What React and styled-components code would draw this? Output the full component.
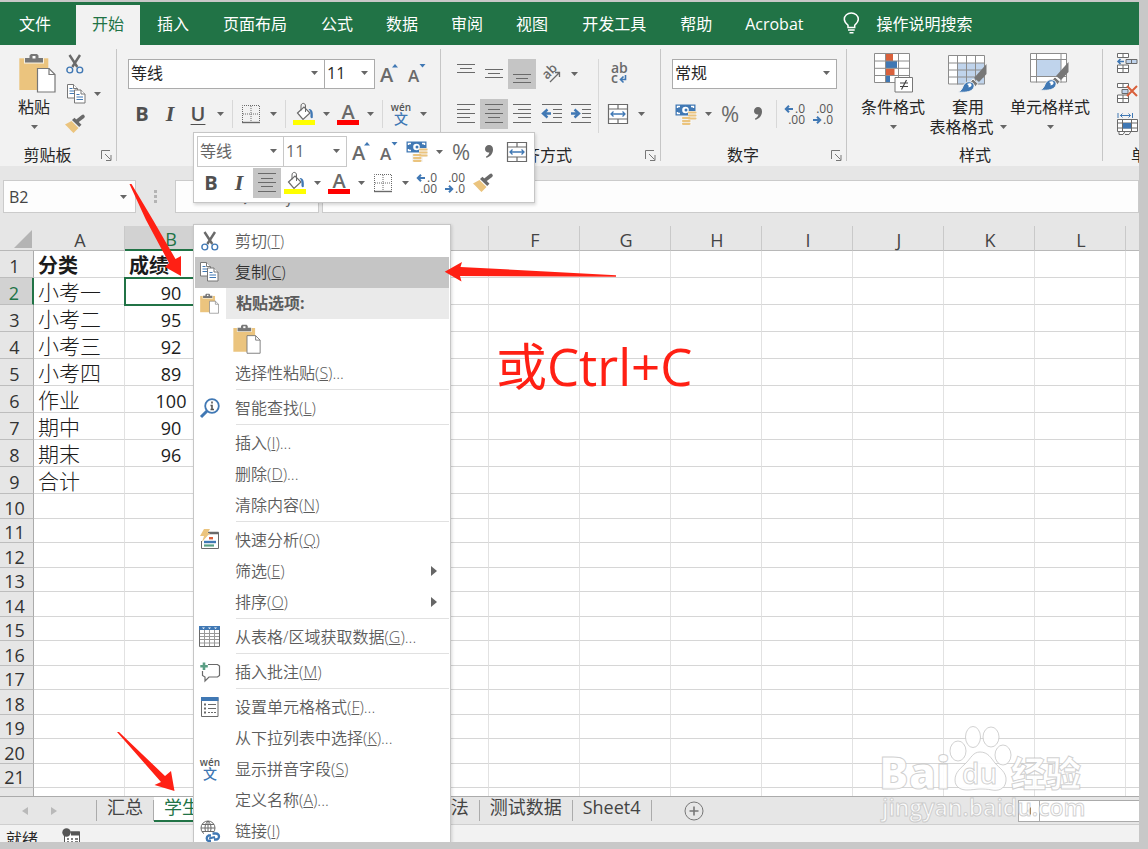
import React, {useState} from 'react'
import styled, {createGlobalStyle} from 'styled-components'

const green = '#217346'
const grey = '#6a6a6a'
const blue = '#4078b4'
const sand = '#ebc47e'
const rust = '#d9603b'

const GlobalStyle = createGlobalStyle`

    * {
        box-sizing: border-box;
    }

    body {
        margin: 0;
        font-family: "Open Sans", "Noto Sans CJK SC", sans-serif;
        font-size: 16px;
        color: #262626;
        background-color: #c8c8c8;
    }

    button, input, select {
        font: inherit;
        color: inherit;
        margin: 0;
        padding: 0;
        border: none;
        background: none;
    }

    svg {
        display: block;
        flex-shrink: 0;
        overflow: visible;
    }

`

const Page = styled.div`

    height: 100vh;
    padding: 2px 9px 7px 0;

`

const Window = styled.div`

    height: 100%;
    display: flex;
    flex-direction: column;
    position: relative;
    overflow: hidden;
    background-color: #e6e6e6;

`

const TabBar = styled.nav`

    display: flex;
    gap: 1px;
    height: 43px;
    flex-shrink: 0;
    padding: 3px 0 0 3px;
    background-color: ${green};
    overflow: hidden;

`

const RibbonTab = styled.button`

    padding: 0 ${props => props.$wide ? "17px" : "16px"} 2px;
    margin-right: ${props => props.$file ? "8px" : "0"};
    line-height: 36px;
    white-space: nowrap;
    color: ${props => props.$active ? green : "#ffffff"};
    background-color: ${props => props.$active ? "#f2f2f2" : "transparent"};

`

const TellMe = styled.button`

    display: flex;
    align-items: center;
    gap: 16px;
    padding: 0 0 4px 23px;
    color: #ffffff;
    white-space: nowrap;

`

const Ribbon = styled.div`

    display: flex;
    height: 121px;
    flex-shrink: 0;
    overflow: hidden;
    background-color: #f2f2f2;

`

const Group = styled.section`

    display: flex;
    flex-direction: column;
    justify-content: space-between;
    flex-shrink: 0;
    height: 117px;
    margin-top: 4px;
    min-width: ${props => props.$min || 0}px;
    position: relative;

    &::after {
        content: "";
        position: absolute;
        top: 0;
        right: 0;
        width: 1px;
        height: 112px;
        background-color: #c6c6c6;
    }

`

const GroupBody = styled.div`

    display: flex;
    padding: ${props => props.$top}px 0 0 ${props => props.$left || 11}px;

`

const GroupFooter = styled.div`

    display: flex;
    align-items: center;
    height: 22px;

`

const GroupName = styled.span`

    flex: 1;
    padding-bottom: 2px;
    text-align: center;
    white-space: nowrap;

`

const LaunchButton = styled.button`

    width: 22px;
    display: flex;
    justify-content: center;

`

const Stack = styled.div`

    display: flex;
    flex-direction: column;
    gap: ${props => props.$gap || 0}px;

`

const ToolRow = styled.div`

    display: flex;
    align-items: center;
    height: 30px;

`

const ToolButton = styled.button`

    width: ${props => props.$width || 28}px;
    height: 30px;
    flex-shrink: 0;
    display: flex;
    align-items: center;
    justify-content: center;
    background-color: ${props => props.$active ? "#c5c5c5" : "transparent"};

`

const CaretButton = styled(ToolButton)`

    width: 16px;

`

const Letter = styled.span`

    font-family: ${props => props.$italic ? '"Liberation Serif", serif' : '"Open Sans", sans-serif'};
    font-size: ${props => props.$italic ? "22px" : "20px"};
    line-height: 24px;
    font-weight: ${props => props.$line ? 600 : 700};
    font-style: ${props => props.$italic ? "italic" : "normal"};
    text-decoration: ${props => props.$line ? "underline" : "none"};
    text-decoration-thickness: 1px;
    text-underline-offset: 3px;
    color: #505050;

`

const Percent = styled.span`

    font-size: 22px;
    line-height: 28px;
    padding-bottom: 2px;
    color: ${grey};

`

const Splitter = styled.span`

    width: 1px;
    height: ${props => props.$tall ? "74px" : "28px"};
    margin: 0 4px;
    background-color: #d8d8d8;

`

const Combo = styled.label`

    display: flex;
    align-items: center;
    width: ${props => props.$width}px;
    height: ${props => props.$pale ? "31px" : "30px"};
    padding: 0 6px 2px 2px;
    border: 1px solid ${props => props.$pale ? "#c8c8c8" : "#ababab"};
    background-color: #ffffff;
    color: ${props => props.$pale ? "#666666" : "#262626"};

    & + & {
        margin-left: -1px;
    }

`

const ComboSelect = styled.select`

    flex: 1;
    min-width: 0;
    appearance: none;
    outline: none;
    line-height: 24px;

`

const PasteButton = styled.button`

    display: flex;
    flex-direction: column;
    align-items: center;
    width: 46px;
    margin-right: 6px;
    padding-top: 4px;
    line-height: 20px;

`

const BigButton = styled.button`

    display: flex;
    flex-direction: column;
    align-items: center;
    width: ${props => props.$width}px;
    line-height: 20px;
    white-space: nowrap;

`

const IconBox = styled.span`

    height: 44px;
    display: flex;
    align-items: flex-start;
    padding-left: ${props => props.$shift ? "6px" : "0"};

`

const CaretLine = styled.span`

    height: 20px;
    display: flex;
    align-items: center;
    gap: 6px;

`

const FormulaBar = styled.div`

    display: flex;
    flex-shrink: 0;
    height: 60px;
    padding: 14px 0 13px 3px;

`

const BarBox = styled.label`

    display: flex;
    align-items: center;
    width: ${props => props.$width ? props.$width + "px" : "auto"};
    flex: ${props => props.$width ? "none" : 1};
    padding: 0 8px 0 5px;
    border: 1px solid #cbcbcb;
    background-color: #fdfdfd;

`

const BarInput = styled.input`

    flex: 1;
    min-width: 0;
    outline: none;
    color: #444444;

`

const Grip = styled.span`

    width: 39px;
    display: flex;
    flex-direction: column;
    align-items: center;
    justify-content: center;
    gap: 2px;

    & > i {
        width: 3px;
        height: 3px;
        background-color: #b4b4b4;
    }

`

const EntryButtons = styled.div`

    display: flex;
    align-items: center;
    justify-content: space-around;
    width: 144px;
    margin-right: 3px;
    border: 1px solid #cbcbcb;
    background-color: #fdfdfd;
    color: ${grey};

`

const SheetArea = styled.main`

    flex: 1;
    min-height: 0;
    overflow: hidden;
    background-color: #ffffff;

`

const Sheet = styled.table`

    table-layout: fixed;
    width: 1490px;
    border-collapse: separate;
    border-spacing: 0;
    font-size: 18px;
    line-height: 21px;

`

const HeadRow = styled.tr`

    height: 25px;

`

const Row = styled.tr`

    height: ${props => props.$height}px;

`

const Corner = styled.th`

    width: 34px;
    padding: 2px 2px 0 14px;
    background-color: #e6e6e6;
    border-bottom: 1px solid #b8b8b8;

`

const ColHead = styled.th`

    width: 91px;
    padding: 4px 0 0 2px;
    font-weight: 400;
    line-height: 19px;
    color: ${props => props.$active ? green : "#444444"};
    background-color: ${props => props.$active ? "#d2d2d2" : "#e6e6e6"};
    border-right: 1px solid #c9c9c9;
    border-bottom: ${props => props.$active ? "2px solid " + green : "1px solid #b8b8b8"};

`

const RowHead = styled.th`

    padding: 4px 4px 0 0;
    font-weight: 400;
    line-height: 19px;
    color: ${props => props.$active ? green : "#333333"};
    background-color: ${props => props.$active ? "#d2d2d2" : "#e6e6e6"};
    border-right: ${props => props.$active ? "2px solid " + green : "1px solid #ababab"};
    border-bottom: 1px solid #bdbdbd;

`

const Cell = styled.td`

    padding: ${props => props.$number ? "5px 3px 0 5px" : "2px 4px 0"};
    color: #1c1c1c;
    white-space: nowrap;
    font-size: ${props => props.$number ? "18px" : props.$bold ? "20px" : "21px"};
    font-weight: ${props => props.$bold ? 700 : props.$number ? 400 : 300};
    text-align: ${props => props.$number ? "center" : "left"};
    border-right: 1px solid #e2e2e2;
    border-bottom: 1px solid #d6d6d6;
    outline: ${props => props.$active ? "2px solid " + green : "none"};
    outline-offset: -1px;

`

const SheetBar = styled.div`

    display: flex;
    flex-shrink: 0;
    height: 28px;
    border-top: 1px solid #ababab;
    font-size: 18px;
    color: #444444;

`

const SheetNav = styled.div`

    display: flex;
    align-items: center;
    gap: 23px;
    width: 97px;
    padding-left: 22px;
    border-right: 1px solid #ababab;
    margin: 3px 0;

`

const SheetTab = styled.button`

    position: relative;
    padding: 0 10px 4px;
    margin: 0 1px 2px 0;
    line-height: 20px;
    white-space: nowrap;
    color: ${props => props.$active ? green : "#444444"};
    background-color: ${props => props.$active ? "#ffffff" : "transparent"};
    border-bottom: 2px solid ${props => props.$active ? green : "transparent"};

    &::after {
        content: "";
        position: absolute;
        right: -1px;
        top: 3px;
        width: 1px;
        height: 21px;
        background-color: #ababab;
    }

`

const AddSheet = styled.button`

    margin-left: 32px;

`

const ScrollTrack = styled.div`

    display: flex;
    width: 121px;
    height: 22px;
    margin: 3px 0 0 auto;
    border: 1px solid #ababab;
    border-right: none;
    background-color: #ffffff;

`

const ScrollButton = styled.button`

    width: 21px;
    display: flex;
    align-items: center;
    justify-content: center;
    border-right: 1px solid #ababab;

`

const StatusBar = styled.footer`

    display: flex;
    flex-shrink: 0;
    gap: 24px;
    height: 18px;
    padding: 3px 6px 0;
    overflow: hidden;
    line-height: 22px;
    border-top: 1px solid #cfcfcf;
    background-color: #f2f2f2;

`

const MiniBar = styled.div`

    position: absolute;
    left: 193px;
    top: 130px;
    z-index: 3;
    padding: 3px 3px 4px;
    border: 1px solid #c6c6c6;
    background-color: #ffffff;
    box-shadow: 1px 2px 3px rgba(0, 0, 0, 0.15);

    ${ToolRow} {
        height: 31px;
    }

`

const Menu = styled.div`

    position: absolute;
    left: 193px;
    top: 222px;
    z-index: 2;
    width: 258px;
    padding: 1px;
    border: 1px solid #c6c6c6;
    background-color: #ffffff;
    box-shadow: 1px 1px 3px rgba(0, 0, 0, 0.15);
    font-weight: 350;
    color: #5c5c5c;

`

const MenuItem = styled.button`

    display: flex;
    align-items: center;
    width: 100%;
    height: 31px;
    padding-bottom: 2px;
    text-align: left;
    white-space: nowrap;
    color: ${props => props.$active ? "#303030" : "inherit"};
    background-color: ${props => props.$active ? "#c5c5c5" : "transparent"};

`

const MenuIcon = styled.span`

    width: 31px;
    padding-right: 2px;
    display: flex;
    justify-content: center;

`

const MenuText = styled.span`

    flex: 1;
    padding: 0 0 2px 9px;

`

const MenuArrow = styled.span`

    padding-right: 12px;

`

const MenuHeading = styled.div`

    display: flex;
    align-items: center;
    height: 31px;

    & > strong {
        flex: 1;
        padding-left: 10px;
        line-height: 31px;
        background-color: #eaeaea;
    }

`

const PasteOptions = styled.div`

    height: 39px;
    padding: 5px 0 0 38px;

`

const MenuLine = styled.div`

    margin: 0 0 3px 41px;
    border-top: 1px solid #e1e1e1;

`

const Arrows = styled.svg`

    position: absolute;
    left: 0;
    top: 0;
    z-index: 4;
    pointer-events: none;
    fill: #ff2014;

`

const Note = styled.p`

    position: absolute;
    left: 496px;
    top: 329px;
    margin: 0;
    z-index: 4;
    font-size: 51px;
    line-height: 70px;
    color: #ff2014;

`

const Watermark = styled.svg`

    position: absolute;
    right: 48px;
    bottom: 16px;
    z-index: 4;
    pointer-events: none;

`

const Caret = ({left, right}) => {

    if(left) return <svg width="6" height="8"><path d="M6 0v8L0 4z" fill="#b9b9b9" /></svg>
    if(right) return <svg width="6" height="8"><path d="M0 0v8l6-4z" fill="#b9b9b9" /></svg>

    return <svg width="7" height="4"><path d="M0 0h7L3.5 4z" fill="#666" /></svg>

}

const PasteIcon = ({width, height}) => (
    <svg width={width} height={height} viewBox="0 0 37 40">
        <path d="M.3 5.3h29V37H.3z" fill={sand} />
        <path d="M5 5h20v5.600H5z" fill="#f7f0e0" />
        <path d="M6 5h4.500V2.500L12 1h6l1.500 1.500V5H24v4.500H6z" fill="#777" />
        <path d="M13.500 3h3v2.500h-3z" fill="#fff" />
        <path d="M18.500 15.500H30l6 6v17.500H18.500z" fill="#fff" stroke="#777" strokeWidth="1.200" />
        <path d="M30 15.500v6h6" fill="none" stroke="#777" strokeWidth="1.200" />
    </svg>
)

const CutIcon = () => (
    <svg width="18" height="20" fill="none">
        <path d="M3.500 1l7.800 12M14 1L6.300 13" stroke={grey} strokeWidth="2.400" />
        <circle cx="3.800" cy="16" r="2.900" stroke={blue} strokeWidth="1.400" />
        <circle cx="13.800" cy="16" r="2.900" stroke={blue} strokeWidth="1.400" />
    </svg>
)

const CopyIcon = () => (
    <svg width="19" height="20" fill="#fff">
        <path d="M.5.500h6l4 4v9.500H.5z" stroke="#777" />
        <path d="M6.500.500v4h4" stroke="#777" />
        <path d="M2.500 4.500h3M2.500 7h5M2.500 9.500h5" stroke={blue} />
        <path d="M7.500 6h6.500l4 4v9H7.500z" stroke="#777" />
        <path d="M14 6v4h4" stroke="#777" />
        <path d="M9.500 10.500h3M9.500 13h6.500M9.500 15.500h6.500" stroke={blue} />
    </svg>
)

const BrushIcon = () => (
    <svg width="20" height="18">
        <path d="M0 9.500L6.500 6l7 7-5 5C5 15 3 12 0 9.500z" fill={sand} />
        <path d="M7 5l2.500-2.200 7 7L14.200 12z" fill={grey} />
        <path d="M12 6.200L18 1.500" stroke={grey} strokeWidth="3.600" strokeLinecap="round" />
    </svg>
)

const GrowIcon = ({down}) => (
    <svg width="20" height="24">
        <text x="1" y="20" fontSize={down ? 17 : 20} fontWeight="600" fill={grey}>A</text>
        {down
            ? <path d="M12.500 2h6l-3 3.500z" fill={blue} />
            : <path d="M13 5.500h6L16 2z" fill={blue} />}
    </svg>
)

const BordersIcon = () => (
    <svg width="20" height="20" fill="none" stroke={grey}>
        <path d="M1.500 18V1.500h17V18M10 2v16M2 10h16" strokeDasharray="1 1" />
        <path d="M1 18.500h18" strokeWidth="1.400" />
    </svg>
)

const FillIcon = () => (
    <svg width="22" height="24" fill="none">
        <path d="M4.500 11L11 5l6 6-7 6.500z" fill="#fff" stroke={grey} strokeWidth="1.200" />
        <path d="M8 8.500V4c0-3.500 4.500-3.500 4.500 0v6" stroke={grey} />
        <path d="M15.500 7c3-.5 5 2 4.200 9-2 .5-2.500-.5-2.200-3 .2-3-.5-4.500-2-6z" fill={blue} />
        <path d="M0 18h22v5H0z" fill="#ffff00" />
    </svg>
)

const FontColorIcon = () => (
    <svg width="22" height="24">
        <text x="11" y="16.500" fontSize="20" fontWeight="600" textAnchor="middle" fill={grey}>A</text>
        <path d="M0 18h22v5H0z" fill="#ff0000" />
    </svg>
)

const PhoneticIcon = () => (
    <svg width="22" height="24">
        <text x="11" y="8.500" fontSize="10" fontWeight="600" textAnchor="middle" fill="#555">wén</text>
        <text x="11" y="22" fontSize="14" fontWeight="500" textAnchor="middle" fill={blue}>文</text>
    </svg>
)

const LinesIcon = ({lines}) => (
    <svg width="20" height="20" stroke={grey}>
        {lines.map(([y, x, w]) => <path key={y} d={`M${x} ${y}.500h${w}`} />)}
    </svg>
)

const topLines = [[0, 1, 18], [4, 4, 12], [8, 1, 18]]
const midLines = [[5, 1, 18], [9, 4, 12], [13, 1, 18]]
const bottomLines = [[10, 1, 18], [14, 4, 12], [18, 1, 18]]
const leftLines = [[0, 1, 18], [5, 1, 13], [9, 1, 18], [13, 1, 13], [18, 1, 18]]
const centerLines = [[0, 1, 18], [5, 4, 12], [9, 1, 18], [13, 4, 12], [18, 1, 18]]
const rightLines = [[0, 1, 18], [5, 6, 13], [9, 1, 18], [13, 6, 13], [18, 1, 18]]

const IndentIcon = ({right}) => (
    <svg width="20" height="20" fill="none">
        <path d="M0 .5h20M11 5.500h9M11 9.500h9M11 13.500h9M0 18.500h20" stroke={grey} />
        {right
            ? <path d="M0 9.500h6M3.500 5.500L8 9.500l-4.500 4" stroke={blue} strokeWidth="2.400" />
            : <path d="M9 9.500H3M5.500 5.500L1 9.500l4.500 4" stroke={blue} strokeWidth="2.400" />}
    </svg>
)

const OrientationIcon = () => (
    <svg width="20" height="20" fill="none">
        <text x="3" y="13" fontSize="13" fontWeight="600" fill={grey} transform="rotate(-45 8 11)">ab</text>
        <path d="M9 18l9-9M14 8.500h4.500V13" stroke={grey} strokeWidth="1.300" />
    </svg>
)

const WrapIcon = () => (
    <svg width="20" height="24" fill="none">
        <text x="3" y="11" fontSize="14" fontWeight="600" fill={grey}>ab</text>
        <text x="3" y="21" fontSize="14" fontWeight="600" fill={grey}>c</text>
        <path d="M17.500 13v4.500H13M15.500 14.500l-3 3 3 3" stroke={blue} strokeWidth="1.600" />
    </svg>
)

const MergeIcon = () => (
    <svg width="20" height="20" fill="none">
        <path d="M.5.500h19v19H.5zM.5 5h19M.5 15h19M10 .5V5M10 15v4.500" fill="#fff" stroke={grey} strokeWidth="1.200" />
        <path d="M3 10h14M5.500 7.500L3 10l2.500 2.500M14.500 7.500L17 10l-2.500 2.500" stroke={blue} strokeWidth="1.300" />
    </svg>
)

const MoneyIcon = () => (
    <svg width="22" height="21">
        <path d="M.5.500h20v11H.5z" fill={blue} />
        <path d="M2.500 4V2.500H5M16 2.500h2.500V4M2.500 8v1.500H5" fill="none" stroke="#fff" strokeWidth="1.400" />
        <circle cx="10.500" cy="6" r="3.300" fill="#fff" />
        <circle cx="11" cy="6" r="1.500" fill={blue} />
        <path d="M13 7h9v9h-5v5H6v-8h7z" fill="#f5f5f5" />
        <path d="M14 8.500h6.500M14 11.500h6.500M14 14.500h6.500M8 14h6.500M8 17h6.500M8 19.800h6.500" stroke={sand} strokeWidth="2.200" strokeLinecap="round" />
    </svg>
)

const CommaIcon = () => (
    <svg width="10" height="16">
        <path d="M5 1c2.500 0 4 1.700 4 4.500 0 4-2.500 7-6.500 8.500L2 12.500c2-1 3.200-2.500 3.400-4C3 9 1 7.500 1 5c0-2.300 1.700-4 4-4z" fill={grey} />
    </svg>
)

const DecimalIcon = ({less}) => (
    <svg width="22" height="24" fill="none">
        <text x="21" y="11" fontSize="12" fontWeight="500" textAnchor="end" fill="#555">{less ? ".00" : ".0"}</text>
        <text x="21" y="22" fontSize="12" fontWeight="500" textAnchor="end" fill="#555">{less ? ".0" : ".00"}</text>
        {less
            ? <path d="M1 18h7M5 14.800L8.200 18 5 21.200" stroke={blue} strokeWidth="2" />
            : <path d="M9 7H2M5 3.800L1.800 7 5 10.200" stroke={blue} strokeWidth="2" />}
    </svg>
)

const LaunchIcon = () => (
    <svg width="11" height="11" fill="none" stroke="#777">
        <path d="M.5 9V.5H9M4 4l5.500 5.500M10 5v5.500H5" />
    </svg>
)

const BulbIcon = () => (
    <svg width="17" height="22" fill="none" stroke="#fff" strokeWidth="1.500">
        <path d="M5 15.500v-2.300C3 11.500 1.300 9.800 1.300 7.300 1.300 3.700 4.500 1 8.300 1s7 2.700 7 6.300c0 2.500-1.700 4.200-3.600 5.900v2.300zM5 18h6.700M6.500 20.700h4" />
    </svg>
)

const ConditionalIcon = () => (
    <svg width="39" height="40">
        <path d="M.5.500h35v29H.5z" fill="#fff" />
        <path d="M11.500 1H19v7h-7.500zM11.500 15.500H20.500v7h-9z" fill={rust} />
        <path d="M11.500 8H23v7H11.500zM11.500 22.500H16v6.500h-4.500z" fill={blue} />
        <path d="M.5.500h35v29H.5zM.5 8h35M.5 15.300h35M.5 22.500h35M11.500 .5v29M24.500 .5v29" fill="none" stroke="#8c8c8c" />
        <path d="M21 24.500h17.500v14.500H21z" fill="#fff" stroke="#777" />
        <path d="M26 30h8M26 33.500h8M32.500 27l-5 9.500" stroke="#444" strokeWidth="1.200" />
    </svg>
)

const PaintBrush = () => (
    <g>
        <path d="M38.500 9v10L31 27l-5-4z" fill="#777" />
        <path d="M25 24l5 4.500-2.500 3-5-5z" fill="#777" stroke="#f2f2f2" />
        <path d="M10 37c3-1 4-3 5-5.500 1.500-4 4.500-5.300 8-4.500 3.500 1 4 4.500 2 7-3 3.500-9 3.500-15 3z" fill={blue} stroke="#f2f2f2" />
        <path d="M19 29c2-1 4-1 4.500.5s-1 2.500-3 3c.5-1.500 0-2.500-1.500-3.500z" fill="#fff" />
    </g>
)

const FormatTableIcon = () => (
    <svg width="40" height="40">
        <g transform="translate(0 2)">
            <path d="M.5.500h36v29H.5z" fill="#fff" />
            <path d="M10 8h27v21.500H10z" fill="#c0d4ec" />
            <path d="M.5.500h36v28.500H.5zM.5 8h36M.5 15h36M.5 22h36M9.500 .5v29M18.500 .5v29M27.500 .5v29" fill="none" stroke="#8c8c8c" />
            <PaintBrush />
        </g>
    </svg>
)

const CellStyleIcon = () => (
    <svg width="40" height="38">
        <path d="M.5.500h36v28.500H.5z" fill="#fff" />
        <path d="M7 7h24v17H7z" fill="#c0d4ec" />
        <path d="M.5.500h36v28.500H.5zM.5 6.500h36M.5 23.500h36M6.500 .5v29M31 .5v29" fill="none" stroke="#8c8c8c" />
        <PaintBrush />
    </svg>
)

const CellsIcon = ({kind}) => (
    <svg width="24" height="22" fill="#fff" stroke={grey}>
        {kind === "format"
            ? <>
                <path d="M.5 6.500h20v12H.5zM.5 10h20M.5 15h20M5.500 6.500v12M14.500 6.500v12M2 18.500v3h4l2-3M14 18.500l-2 3h-4" />
                <path d="M6 10h8v5.500H6z" fill={blue} stroke="none" />
                <path d="M1 0v5M15.500 0v5M3 2.500h10.500M5.500.500l-2 2 2 2M11.500.500l2 2-2 2" fill="none" stroke={blue} />
            </>
            : <>
                <path d="M.5.500h11v4H.5zM6 .5v4M.5 12h11v7.500H.5zM.5 15.500h11M6 12v7.500" />
                <path d={kind === "delete" ? "M5 6.500h6v4H5z" : "M9 6.500h11v4H9zM14.500 6.500v4"} fill="#c0d4ec" />
                {kind === "delete"
                    ? <path d="M10 3l10 10M20 3L10 13" stroke={rust} strokeWidth="2" />
                    : <path d="M7 8.500H1M3.500 6L1 8.500 3.500 11" fill="none" stroke={blue} strokeWidth="1.600" />}
            </>}
    </svg>
)

const LookupIcon = () => (
    <svg width="20" height="20" fill="none">
        <circle cx="12" cy="8" r="6.800" stroke={blue} strokeWidth="1.800" />
        <path d="M7 13L1 19" stroke={blue} strokeWidth="3" />
        <path d="M12 3.500v2M10.500 7.500H12v4M10.500 11.500h3.500" stroke="#555" strokeWidth="1.600" />
    </svg>
)

const QuickIcon = () => (
    <svg width="20" height="21" fill="none">
        <path d="M8 3.500h10.500v16h-17V12" fill="#fff" stroke={grey} />
        <path d="M8 4h10.500" stroke={grey} strokeWidth="2.500" />
        <path d="M9 9.200h4" stroke={rust} strokeWidth="2.400" />
        <path d="M4 13h12" stroke={blue} strokeWidth="2.400" />
        <path d="M4 16.500h10" stroke="#5a9e84" strokeWidth="2.200" />
        <path d="M4 0h6L7.500 4H10l-8 9 2-6H0z" fill={sand} />
    </svg>
)

const TableIcon = () => (
    <svg width="21" height="21" fill="none">
        <path d="M.5.500h20v20H.5z" fill="#fff" stroke={grey} />
        <path d="M5.500 4v16M10.500 4v16M15.500 4v16M1 7.500h19M1 10.500h19M1 13.500h19M1 17h19" stroke="#999" />
        <path d="M0 0h21v4H0z" fill={blue} />
        <path d="M3 1.500h3L4.500 3zM9 1.500h3L10.500 3zM15 1.500h3L16.500 3z" fill="#fff" />
    </svg>
)

const CommentIcon = () => (
    <svg width="20" height="20" fill="none">
        <path d="M8 2.500h9.500l2 1.500v9.500l-2 1.500H9l-4 4v-4l-2.500-1.500V9" stroke={grey} strokeWidth="1.200" />
        <path d="M4 .5v7.500M.3 4.200h7.500" stroke="#5a9e84" strokeWidth="2.600" />
    </svg>
)

const FormatIcon = () => (
    <svg width="18" height="20" fill="none">
        <path d="M.5.500h16.500v19H.5z" fill="#fff" stroke={grey} />
        <path d="M0 0h17.500v4H0z" fill={blue} />
        <path d="M3 7.500h2M3 11.500h2M3 15.500h2" stroke={grey} strokeWidth="2" />
        <path d="M7 7.500h8M7 11.500h8M7 15.500h2M10 15.500h2M13 15.500h2" stroke={grey} />
    </svg>
)

const LinkIcon = () => (
    <svg width="20" height="22" fill="none">
        <circle cx="8" cy="8" r="7" stroke={grey} />
        <path d="M1 8h14M2 4.500h12M2 11.500h12M8 1v14M8 1C4 4 4 12 8 15M8 1c4 3 4 11 0 14" stroke={grey} />
        <path d="M4 12h16v10H4z" fill="#fff" />
        <path d="M11 15.500h-2.500a3 3 0 000 5.500H11M12.500 13.500H16a3 3 0 010 6h-2M9 18.500l6-1.500" stroke={blue} strokeWidth="2.300" />
    </svg>
)

const MacroIcon = () => (
    <svg width="19" height="18">
        <path d="M2.500 4h15v13h-15z" fill="#fff" stroke="#555" />
        <path d="M9 3.500h9v4H9z" fill="#555" />
        <path d="M5 11h2M9 11h2M13 11h3M5 14h2M9 14h2M13 14h3" stroke="#555" strokeWidth="1.500" />
        <circle cx="4.500" cy="4.500" r="4.200" fill="#555" />
    </svg>
)

const tabs = ["文件", "开始", "插入", "页面布局", "公式", "数据", "审阅", "视图", "开发工具", "帮助", "Acrobat"]

const columns = "ABCDEFGHIJKLMNOP".split("")

const data = [
    ["分类", "成绩"],
    ["小考一", 90],
    ["小考二", 95],
    ["小考三", 92],
    ["小考四", 89],
    ["作业", 100],
    ["期中", 90],
    ["期末", 96],
    ["合计"],
]

const rows = Array.from({length: 24}, (_, i) => ({
    number: i + 1,
    height: i < 9 ? 27 : i % 2 ? 25 : 24,
    values: data[i] || [],
}))

const sheets = ["汇总", "学生成绩", "Sheet2", "Sheet3", "加权法", "测试数据", "Sheet4"]

const menuItems = [
    {text: "选择性粘贴", hotkey: "S", more: true},
    {line: true},
    {text: "智能查找", hotkey: "L", icon: <LookupIcon />},
    {line: true},
    {text: "插入", hotkey: "I", more: true},
    {text: "删除", hotkey: "D", more: true},
    {text: "清除内容", hotkey: "N"},
    {line: true},
    {text: "快速分析", hotkey: "Q", icon: <QuickIcon />},
    {text: "筛选", hotkey: "E", sub: true},
    {text: "排序", hotkey: "O", sub: true},
    {line: true},
    {text: "从表格/区域获取数据", hotkey: "G", more: true, icon: <TableIcon />},
    {line: true},
    {text: "插入批注", hotkey: "M", icon: <CommentIcon />},
    {line: true},
    {text: "设置单元格格式", hotkey: "F", more: true, icon: <FormatIcon />},
    {text: "从下拉列表中选择", hotkey: "K", more: true},
    {text: "显示拼音字段", hotkey: "S", icon: <PhoneticIcon />},
    {text: "定义名称", hotkey: "A", more: true},
    {text: "链接", hotkey: "I", icon: <LinkIcon />},
]

const ComboBox = ({label, value, width, pale}) => (
    <Combo $width={width} $pale={pale}>
        <ComboSelect aria-label={label} defaultValue={value}>
            <option>{value}</option>
        </ComboSelect>
        <Caret />
    </Combo>
)

const Drop = () => <CaretButton aria-label="更多"><Caret /></CaretButton>

const Footer = ({name, launch}) => (
    <GroupFooter>
        <GroupName>{name}</GroupName>
        {launch && <LaunchButton aria-label={name + "设置"}><LaunchIcon /></LaunchButton>}
    </GroupFooter>
)

const Item = ({text, hotkey, more, sub, icon, active}) => (
    <MenuItem role="menuitem" $active={active}>
        <MenuIcon>{icon}</MenuIcon>
        <MenuText>{text}(<u>{hotkey}</u>){more && "..."}</MenuText>
        {sub && <MenuArrow><svg width="6" height="10"><path d="M0 0v10l6-5z" fill="#666" /></svg></MenuArrow>}
    </MenuItem>
)

const RibbonGroups = () => (
    <Ribbon>
        <Group $min={117}>
            <GroupBody $top={0}>
                <PasteButton>
                    <IconBox $shift><PasteIcon width="37" height="40" /></IconBox>
                    粘贴
                    <CaretLine><Caret /></CaretLine>
                </PasteButton>
                <Stack>
                    <ToolRow><ToolButton $width={24} aria-label="剪切"><CutIcon /></ToolButton></ToolRow>
                    <ToolRow><ToolButton $width={26} aria-label="复制"><CopyIcon /></ToolButton><Drop /></ToolRow>
                    <ToolRow><ToolButton $width={24} aria-label="格式刷"><BrushIcon /></ToolButton></ToolRow>
                </Stack>
            </GroupBody>
            <Footer name="剪贴板" launch />
        </Group>
        <Group $min={324}>
            <GroupBody $top={10}>
                <Stack $gap={10}>
                    <ToolRow>
                        <ComboBox label="字体" value="等线" width={197} />
                        <ComboBox label="字号" value="11" width={51} />
                        <ToolButton aria-label="增大字号"><GrowIcon /></ToolButton>
                        <ToolButton aria-label="减小字号"><GrowIcon down /></ToolButton>
                    </ToolRow>
                    <ToolRow>
                        <ToolButton><Letter>B</Letter></ToolButton>
                        <ToolButton><Letter $italic>I</Letter></ToolButton>
                        <ToolButton><Letter $line>U</Letter></ToolButton>
                        <Drop />
                        <Splitter />
                        <ToolButton aria-label="边框"><BordersIcon /></ToolButton>
                        <Drop />
                        <Splitter />
                        <ToolButton aria-label="填充颜色"><FillIcon /></ToolButton>
                        <Drop />
                        <ToolButton aria-label="字体颜色"><FontColorIcon /></ToolButton>
                        <Drop />
                        <Splitter />
                        <ToolButton aria-label="拼音"><PhoneticIcon /></ToolButton>
                        <Drop />
                    </ToolRow>
                </Stack>
            </GroupBody>
            <Footer name="字体" launch />
        </Group>
        <Group $min={220}>
            <GroupBody $top={10}>
                <Stack $gap={10}>
                    <ToolRow>
                        <ToolButton aria-label="顶端对齐"><LinesIcon lines={topLines} /></ToolButton>
                        <ToolButton aria-label="垂直居中"><LinesIcon lines={midLines} /></ToolButton>
                        <ToolButton aria-label="底端对齐" $active><LinesIcon lines={bottomLines} /></ToolButton>
                        <ToolButton $width={30} aria-label="方向"><OrientationIcon /></ToolButton>
                        <Drop />
                    </ToolRow>
                    <ToolRow>
                        <ToolButton aria-label="左对齐"><LinesIcon lines={leftLines} /></ToolButton>
                        <ToolButton aria-label="居中" $active><LinesIcon lines={centerLines} /></ToolButton>
                        <ToolButton aria-label="右对齐"><LinesIcon lines={rightLines} /></ToolButton>
                        <ToolButton $width={32} aria-label="减少缩进"><IndentIcon /></ToolButton>
                        <ToolButton $width={26} aria-label="增加缩进"><IndentIcon right /></ToolButton>
                    </ToolRow>
                </Stack>
                <Splitter $tall />
                <Stack $gap={10}>
                    <ToolRow><ToolButton $width={30} aria-label="自动换行"><WrapIcon /></ToolButton></ToolRow>
                    <ToolRow><ToolButton $width={30} aria-label="合并后居中"><MergeIcon /></ToolButton><Drop /></ToolRow>
                </Stack>
            </GroupBody>
            <Footer name="对齐方式" launch />
        </Group>
        <Group $min={186}>
            <GroupBody $top={10}>
                <Stack $gap={10}>
                    <ToolRow><ComboBox label="数字格式" value="常规" width={165} /></ToolRow>
                    <ToolRow>
                        <ToolButton aria-label="会计数字格式"><MoneyIcon /></ToolButton>
                        <Drop />
                        <ToolButton><Percent>%</Percent></ToolButton>
                        <ToolButton aria-label="千位分隔样式"><CommaIcon /></ToolButton>
                        <Splitter />
                        <ToolButton aria-label="增加小数位数"><DecimalIcon /></ToolButton>
                        <ToolButton aria-label="减少小数位数"><DecimalIcon less /></ToolButton>
                    </ToolRow>
                </Stack>
            </GroupBody>
            <Footer name="数字" launch />
        </Group>
        <Group $min={256}>
            <GroupBody $top={4} $left={13}>
                <BigButton $width={66}>
                    <IconBox><ConditionalIcon /></IconBox>
                    条件格式
                    <CaretLine><Caret /></CaretLine>
                </BigButton>
                <BigButton $width={84}>
                    <IconBox><FormatTableIcon /></IconBox>
                    套用
                    <CaretLine>表格格式<Caret /></CaretLine>
                </BigButton>
                <BigButton $width={80}>
                    <IconBox><CellStyleIcon /></IconBox>
                    单元格样式
                    <CaretLine><Caret /></CaretLine>
                </BigButton>
            </GroupBody>
            <Footer name="样式" />
        </Group>
        <Group $min={104}>
            <GroupBody $top={0} $left={12}>
                <Stack>
                    <ToolRow><ToolButton aria-label="插入"><CellsIcon kind="insert" /></ToolButton></ToolRow>
                    <ToolRow><ToolButton aria-label="删除"><CellsIcon kind="delete" /></ToolButton></ToolRow>
                    <ToolRow><ToolButton aria-label="格式"><CellsIcon kind="format" /></ToolButton></ToolRow>
                </Stack>
            </GroupBody>
            <Footer name="单元格" />
        </Group>
    </Ribbon>
)

const Grid = ({selected, onSelect}) => (
    <SheetArea>
        <Sheet>
            <thead>
                <HeadRow>
                    <Corner aria-label="全选"><svg width="18" height="18"><path d="M18 0v18H0z" fill="#b4b4b4" /></svg></Corner>
                    {columns.map((name, c) => (
                        <ColHead key={name} scope="col" $active={c === selected.col}>{name}</ColHead>
                    ))}
                </HeadRow>
            </thead>
            <tbody>
                {rows.map((row, r) => (
                    <Row key={row.number} $height={row.height}>
                        <RowHead scope="row" $active={r === selected.row}>{row.number}</RowHead>
                        {columns.map((name, c) => (
                            <Cell
                                key={name}
                                $bold={r === 0}
                                $number={typeof row.values[c] === "number"}
                                $active={r === selected.row && c === selected.col}
                                onClick={() => onSelect({row: r, col: c})}
                            >
                                {row.values[c]}
                            </Cell>
                        ))}
                    </Row>
                ))}
            </tbody>
        </Sheet>
    </SheetArea>
)

const QuickBar = () => (
    <MiniBar role="toolbar">
        <ToolRow>
            <ComboBox label="字体" value="等线" width={87} pale />
            <ComboBox label="字号" value="11" width={64} pale />
            <ToolButton aria-label="增大字号"><GrowIcon /></ToolButton>
            <ToolButton aria-label="减小字号"><GrowIcon down /></ToolButton>
            <ToolButton aria-label="会计数字格式"><MoneyIcon /></ToolButton>
            <Drop />
            <ToolButton><Percent>%</Percent></ToolButton>
            <ToolButton aria-label="千位分隔样式"><CommaIcon /></ToolButton>
            <ToolButton aria-label="合并后居中"><MergeIcon /></ToolButton>
        </ToolRow>
        <ToolRow>
            <ToolButton><Letter>B</Letter></ToolButton>
            <ToolButton><Letter $italic>I</Letter></ToolButton>
            <ToolButton aria-label="居中" $active><LinesIcon lines={centerLines} /></ToolButton>
            <ToolButton aria-label="填充颜色"><FillIcon /></ToolButton>
            <Drop />
            <ToolButton aria-label="字体颜色"><FontColorIcon /></ToolButton>
            <Drop />
            <ToolButton aria-label="边框"><BordersIcon /></ToolButton>
            <Drop />
            <ToolButton aria-label="增加小数位数"><DecimalIcon /></ToolButton>
            <ToolButton aria-label="减少小数位数"><DecimalIcon less /></ToolButton>
            <ToolButton aria-label="格式刷"><BrushIcon /></ToolButton>
        </ToolRow>
    </MiniBar>
)

const ContextMenu = () => (
    <Menu role="menu">
        <Item text="剪切" hotkey="T" icon={<CutIcon />} />
        <Item text="复制" hotkey="C" icon={<CopyIcon />} active />
        <MenuHeading>
            <MenuIcon><PasteIcon width="19" height="21" /></MenuIcon>
            <strong>粘贴选项:</strong>
        </MenuHeading>
        <PasteOptions>
            <button aria-label="粘贴"><PasteIcon width="28" height="30" /></button>
        </PasteOptions>
        {menuItems.map((item, i) => item.line ? <MenuLine key={i} /> : <Item key={i} {...item} />)}
    </Menu>
)

const BaiduMark = () => (
    <Watermark width="214" height="104" fill="#fff" fillOpacity="0.9" stroke="#bdbdbd" strokeOpacity="0.7">
        <text x="2" y="67" fontSize="44" fontWeight="800">Bai</text>
        <ellipse cx="81" cy="29" rx="8" ry="10" />
        <ellipse cx="96" cy="15" rx="7.500" ry="10.500" />
        <ellipse cx="114" cy="15" rx="8" ry="10" />
        <ellipse cx="126" cy="33" rx="8" ry="10" />
        <path d="M103 30c8 0 11 6 15 11s12 9 11 18-9 10-14 9-8-1-12-1-8 1-13 1-12-2-12-10 6-12 11-17 7-11 14-11z" />
        <text x="85" y="62" fontSize="28" fontWeight="600">du</text>
        <text x="134" y="65" fontSize="35" fontWeight="900">经验</text>
        <text x="5" y="94" fontSize="23" fontWeight="600">jingyan.baidu.com</text>
    </Watermark>
)

const App = () => {

    const [tab, setTab] = useState("开始")
    const [sheet, setSheet] = useState("学生成绩")
    const [selected, setSelected] = useState({row: 1, col: 1})

    return (
        <Page>
            <GlobalStyle />
            <Window>
                <TabBar>
                    {tabs.map((name) => (
                        <RibbonTab
                            key={name}
                            $file={name === "文件"}
                            $wide={name.length === 4}
                            $active={name === tab}
                            onClick={() => setTab(name)}
                        >
                            {name}
                        </RibbonTab>
                    ))}
                    <TellMe><BulbIcon />操作说明搜索</TellMe>
                </TabBar>
                <RibbonGroups />
                <FormulaBar>
                    <BarBox $width={133}>
                        <BarInput
                            aria-label="名称框"
                            readOnly
                            value={columns[selected.col] + (selected.row + 1)}
                        />
                        <Caret />
                    </BarBox>
                    <Grip><i /><i /><i /></Grip>
                    <EntryButtons>
                        <button>✕</button>
                        <button>✓</button>
                        <button><i>fx</i></button>
                    </EntryButtons>
                    <BarBox>
                        <BarInput
                            aria-label="编辑栏"
                            readOnly
                            value={rows[selected.row].values[selected.col] ?? ""}
                        />
                    </BarBox>
                </FormulaBar>
                <Grid selected={selected} onSelect={setSelected} />
                <SheetBar>
                    <SheetNav><Caret left /><Caret right /></SheetNav>
                    {sheets.map((name) => (
                        <SheetTab key={name} $active={name === sheet} onClick={() => setSheet(name)}>
                            {name}
                        </SheetTab>
                    ))}
                    <AddSheet aria-label="新工作表">
                        <svg width="20" height="20" fill="none" stroke="#777">
                            <circle cx="10" cy="10" r="9" />
                            <path d="M10 5.500v9M5.500 10h9" strokeWidth="1.600" />
                        </svg>
                    </AddSheet>
                    <ScrollTrack>
                        <ScrollButton aria-label="向左滚动">
                            <svg width="4" height="8"><path d="M4 0v8L0 4z" fill="#555" /></svg>
                        </ScrollButton>
                    </ScrollTrack>
                </SheetBar>
                <StatusBar>就绪<MacroIcon /></StatusBar>
                <ContextMenu />
                <QuickBar />
                <Arrows width="640" height="800">
                    <path d="M129.500 182h2L153 218l22.500 39 5.500-3v20l-16-9 4-4-23-43z" />
                    <path d="M444.700 269.700L462 260l-1.500 5L616 273.200v1.600L460 274l1.500 5.500z" />
                    <path d="M117 730h2l46 44 6-5 3.500 20-20-6 6.500-3z" />
                </Arrows>
                <Note>或Ctrl+C</Note>
                <BaiduMark />
            </Window>
        </Page>
    )
}

export default App
